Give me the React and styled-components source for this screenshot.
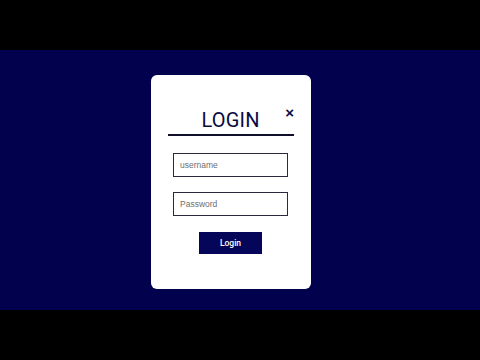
import React from 'react';
import styled, { createGlobalStyle } from 'styled-components';

const GlobalStyle = createGlobalStyle`
  html, body {
    margin: 0;
    padding: 0;
    background: #000;
    font-family: Roboto, "Liberation Sans", sans-serif;
  }
`;

const Screen = styled.div`
  width: 480px;
  height: 360px;
  display: flex;
  flex-direction: column;
  background: #000;
`;

const Stage = styled.div`
  margin-top: 50px;
  height: 260px;
  background: #01014d;
  display: flex;
  align-items: flex-start;
  padding: 25px 0 0 151px;
  box-sizing: border-box;
`;

const Card = styled.div`
  position: relative;
  width: 160px;
  height: 214px;
  background: #fff;
  border-radius: 6px;
  display: flex;
  flex-direction: column;
  align-items: center;
  padding: 33px 1px 0 0;
  box-sizing: border-box;
`;

const Title = styled.h2`
  margin: 0;
  font-size: 20px;
  line-height: 24px;
  font-weight: 400;
  color: #0a0a42;
  letter-spacing: 0.2px;
`;

const Close = styled.span`
  position: absolute;
  top: 30px;
  right: 17px;
  font-family: "Liberation Sans", Arial, sans-serif;
  font-size: 15px;
  font-weight: 700;
  line-height: 15px;
  color: #0c0c45;
  cursor: pointer;
`;

const Divider = styled.div`
  width: 126px;
  height: 2px;
  margin-top: 2px;
  background: #10102a;
`;

const Form = styled.form`
  display: flex;
  flex-direction: column;
  align-items: center;
  gap: 15px;
  margin-top: 17px;
`;

const Field = styled.input`
  width: 115px;
  height: 24px;
  box-sizing: border-box;
  border: 1px solid #2a2a3e;
  padding: 0 6px;
  font-family: "Liberation Sans", Arial, sans-serif;
  font-size: 8.5px;
  color: #333;
  outline: none;

  &::placeholder {
    color: #6f6f6f;
  }
`;

const Submit = styled.button`
  margin-top: 1px;
  width: 63px;
  height: 22px;
  border: none;
  background: #05055a;
  color: #fff;
  font-family: Roboto, "Liberation Sans", sans-serif;
  font-size: 8.5px;
  font-weight: 500;
  cursor: pointer;
`;

export default function App() {
  return (
    <>
      <GlobalStyle />
      <Screen>
        <Stage>
          <Card>
            <Close>×</Close>
            <Title>LOGIN</Title>
            <Divider />
            <Form onSubmit={(e) => e.preventDefault()}>
              <Field type="text" placeholder="username" />
              <Field type="password" placeholder="Password" />
              <Submit type="submit">Login</Submit>
            </Form>
          </Card>
        </Stage>
      </Screen>
    </>
  );
}
